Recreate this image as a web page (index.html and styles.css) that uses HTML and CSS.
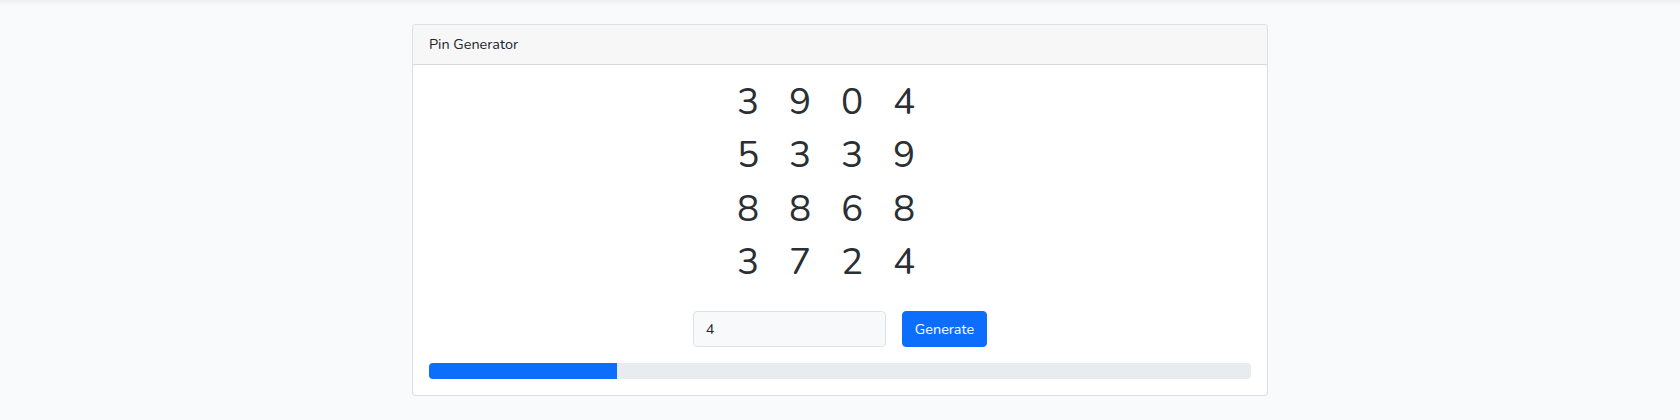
FILE: index.html
```html
<!DOCTYPE html>
<html lang="en">
<head>
<meta charset="utf-8">
<title>Pin Generator</title>
<link rel="stylesheet" href="styles.css">
</head>
<body>
<div class="topbar"></div>
<main class="main">
  <div class="card">
    <div class="card-header">Pin Generator</div>
    <div class="card-body">
      <div class="pins">
        <div class="pin-row"><span class="digit">3</span><span class="digit">9</span><span class="digit">0</span><span class="digit">4</span></div>
        <div class="pin-row"><span class="digit">5</span><span class="digit">3</span><span class="digit">3</span><span class="digit">9</span></div>
        <div class="pin-row"><span class="digit">8</span><span class="digit">8</span><span class="digit">6</span><span class="digit">8</span></div>
        <div class="pin-row"><span class="digit">3</span><span class="digit">7</span><span class="digit">2</span><span class="digit">4</span></div>
      </div>
      <form class="controls" onsubmit="return false">
        <input class="count-input" type="text" value="4">
        <button class="btn-generate" type="submit">Generate</button>
      </form>
      <div class="progress"><div class="progress-bar" style="width: 22.9%"></div></div>
    </div>
  </div>
</main>
</body>
</html>
```

FILE: styles.css
```css
* { box-sizing: border-box; }

html, body {
  margin: 0;
  padding: 0;
}

body {
  background: #f8fafc;
  font-family: "Nunito", "Lato", "Open Sans", sans-serif;
  font-size: 14.4px;
  line-height: 1.6;
  color: #212529;
  height: 420px;
  overflow: hidden;
}

.topbar {
  height: 0;
  box-shadow: 0 0 5px 2px rgba(0, 0, 0, 0.07);
}

.main {
  padding: 24px 0;
  display: flex;
  justify-content: center;
}

.card {
  width: 856px;
  background: #fff;
  border: 1px solid rgba(0, 0, 0, 0.125);
  border-radius: 4px;
  overflow: hidden;
}

.card-header {
  padding: 8px 16px;
  background: #f7f7f7;
  border-bottom: 1px solid rgba(0, 0, 0, 0.125);
  height: 40px;
}

.card-body {
  padding: 11px 16px 16px;
}

.pins {
  display: flex;
  flex-direction: column;
  align-items: center;
}

.pin-row {
  display: flex;
  font-size: 37px;
  line-height: 53.3px;
  height: 53.3px;
  color: #2a2f34;
}

.digit {
  width: 52px;
  padding-left: 1px;
}

.controls {
  display: flex;
  justify-content: center;
  gap: 16px;
  margin: 22px 0 16px;
}

.count-input {
  width: 193px;
  height: 36px;
  padding: 6px 12px;
  font: inherit;
  color: #212529;
  background: #f8f9fa;
  border: 1px solid #dee2e6;
  border-radius: 4px;
  outline: none;
}

.btn-generate {
  height: 36px;
  padding: 6px 12px;
  font: inherit;
  color: #fff;
  background: #0d6efd;
  border: 1px solid #0d6efd;
  border-radius: 4px;
  cursor: pointer;
}

.progress {
  height: 16px;
  background: #e9ecef;
  border-radius: 4px;
  overflow: hidden;
  display: flex;
}

.progress-bar {
  background: #0d6efd;
  height: 100%;
}
```
